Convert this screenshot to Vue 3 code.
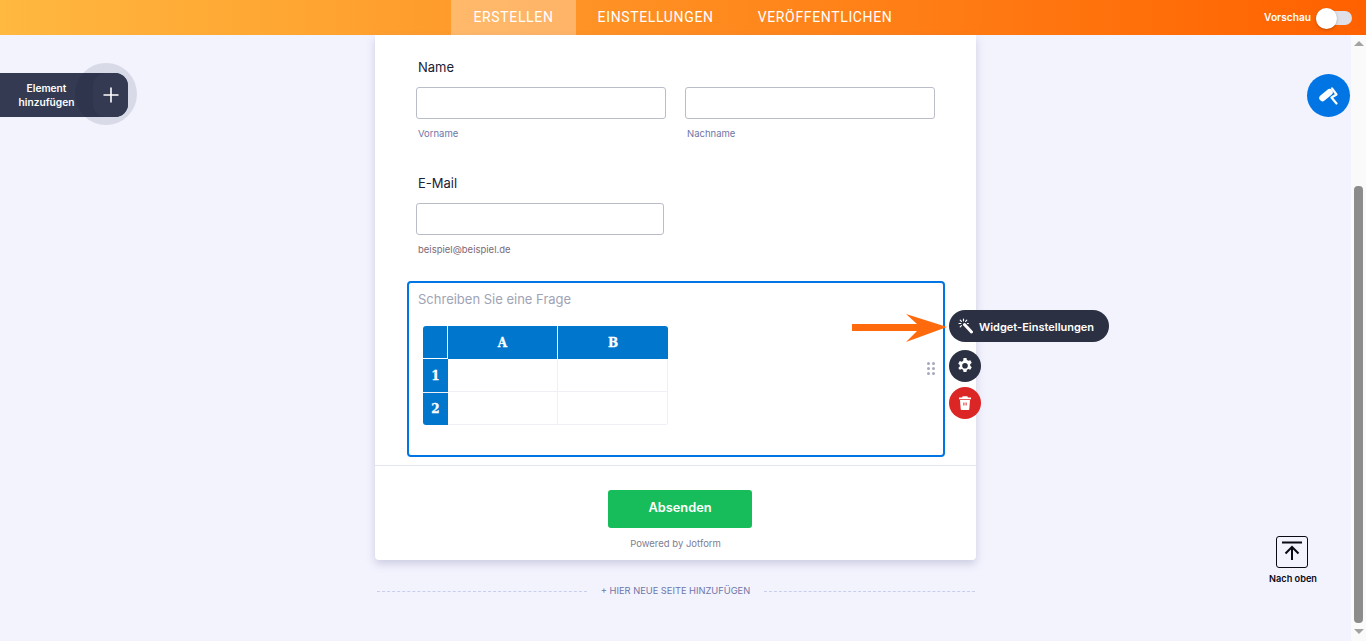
<template>
  <div class="app">
    <header class="topbar">
      <nav class="tabs">
        <a class="tab active">ERSTELLEN</a>
        <a class="tab">EINSTELLUNGEN</a>
        <a class="tab">VERÖFFENTLICHEN</a>
      </nav>
      <div class="preview">
        <span class="preview-label">Vorschau</span>
        <span class="toggle"><i class="knob"></i></span>
      </div>
    </header>

    <div class="body">
      <main class="canvas">
        <section class="card">
          <div class="field">
            <label class="label">Name</label>
            <div class="name-row">
              <div class="col">
                <div class="input"></div>
                <span class="sub">Vorname</span>
              </div>
              <div class="col">
                <div class="input"></div>
                <span class="sub">Nachname</span>
              </div>
            </div>
          </div>

          <div class="field email">
            <label class="label">E-Mail</label>
            <div class="col">
              <div class="input wide"></div>
              <span class="sub mail">beispiel@beispiel.de</span>
            </div>
          </div>

          <div class="question">
            <div class="q-label">Schreiben Sie eine Frage</div>
            <div class="matrix">
              <div class="m-row head">
                <div class="m-corner"></div>
                <div class="m-head" v-for="c in cols" :key="c">{{ c }}</div>
              </div>
              <div class="m-row" v-for="r in rows" :key="r">
                <div class="m-side">{{ r }}</div>
                <div class="m-cell"></div>
                <div class="m-cell"></div>
              </div>
            </div>

            <svg class="grip" width="8" height="13" viewBox="0 0 8 13">
              <g fill="#a6a8bd">
                <circle cx="1.5" cy="1.5" r="1.5" /><circle cx="6.5" cy="1.5" r="1.5" />
                <circle cx="1.5" cy="6.5" r="1.5" /><circle cx="6.5" cy="6.5" r="1.5" />
                <circle cx="1.5" cy="11.500" r="1.5" /><circle cx="6.5" cy="11.500" r="1.5" />
              </g>
            </svg>

            <div class="tools">
              <button class="widget-btn">
                <svg width="16" height="16" viewBox="0 0 16 16">
                  <path d="M6.5 6.500L13.500 14" stroke="#fff" stroke-width="3" stroke-linecap="round" />
                  <g stroke="#fff" stroke-width="1.200" stroke-linecap="round">
                    <path d="M5.500 1v1.800M1 5.500h1.800M2.200 2.200l1.200 1.200M2.200 8.800l1.200-1.200M8.800 2.200L7.600 3.400M9.500 5.500h.8" />
                  </g>
                </svg>
                <span class="widget-text">Widget-Einstellungen</span>
              </button>
              <button class="round dark">
                <svg width="18" height="18" viewBox="0 0 16 16">
                  <path fill="#fff" fill-rule="evenodd" d="M6.700.800h2.600l.4 1.900c.4.200.8.400 1.200.7l1.800-.6 1.300 2.300-1.400 1.300c.1.400.1.900 0 1.300l1.400 1.300-1.300 2.300-1.800-.6c-.4.300-.8.500-1.200.7l-.4 1.900H6.700l-.4-1.900c-.4-.2-.8-.4-1.200-.7l-1.800.6L2 9.800l1.400-1.300c-.1-.4-.1-.9 0-1.300L2 5.900l1.300-2.300 1.800.6c.4-.3.8-.5 1.200-.7zM8 5.300a2.500 2.500 0 1 0 0 5 2.500 2.500 0 0 0 0-5z" />
                </svg>
              </button>
              <button class="round red">
                <svg width="16" height="16" viewBox="0 0 16 16">
                  <path fill="#fff" fill-rule="evenodd" d="M5.600 1.200h4.800l.5 1.300h3.100v1.700H2V2.500h3.100zM3 5h10l-.7 9c0 .6-.5 1-1 1H4.700c-.5 0-1-.4-1-1zM6.400 7.500v3h1v-3zm2.200 0v3h1v-3z" />
                </svg>
              </button>
            </div>

            <svg class="arrow" width="96" height="30" viewBox="0 0 96 30">
              <path fill="#ff6a0d" d="M0 12h65L54 2l41 13-41 15 11-11H0z" />
            </svg>
          </div>

          <div class="submit-area">
            <button class="submit">Absenden</button>
            <div class="powered">Powered by Jotform</div>
          </div>
        </section>

        <div class="add-page">
          <span class="dash"></span>
          <span class="add-text">+ HIER NEUE SEITE HINZUFÜGEN</span>
          <span class="dash"></span>
        </div>
      </main>

      <div class="scrollbar">
        <span class="up"></span>
        <div class="track"><div class="thumb"></div></div>
        <span class="down"></span>
      </div>

      <div class="add-element">
        <span class="add-label">Element hinzufügen</span>
        <span class="add-halo"></span>
        <span class="add-plus">
          <svg width="16" height="16" viewBox="0 0 16 16">
            <path d="M8 .5v15M.5 8h15" stroke="#fff" stroke-width="1.600" />
          </svg>
        </span>
      </div>

      <button class="paint">
        <svg width="22" height="22" viewBox="0 0 22 22">
          <path d="M4.500 13l7-5.800" stroke="#fff" stroke-width="6.500" stroke-linecap="round" />
          <path d="M14 3.500l4.500 6-5 3 5 6" fill="none" stroke="#fff" stroke-width="2.200" stroke-linecap="round" stroke-linejoin="round" />
        </svg>
      </button>

      <div class="to-top">
        <span class="top-box">
          <svg width="30" height="30" viewBox="0 0 30 30">
            <path d="M5 5.500h20M15 23V10M8.500 16.500L15 10l6.500 6.500" fill="none" stroke="#0a0a14" stroke-width="2" />
          </svg>
        </span>
        <span class="top-text">Nach oben</span>
      </div>
    </div>
  </div>
</template>

<script setup>
const cols = ['A', 'B']
const rows = ['1', '2']
</script>

<style>
html, body { margin: 0; height: 100%; overflow: hidden; }
</style>

<style scoped>
.app {
  width: 1366px;
  height: 641px;
  display: flex;
  flex-direction: column;
  background: #f3f3fe;
  font-family: Inter, "Liberation Sans", sans-serif;
  color: #0a1551;
  overflow: hidden;
}
.topbar {
  height: 35px;
  flex: none;
  display: flex;
  justify-content: center;
  position: relative;
  background: linear-gradient(90deg, #ffb840 0%, #ff6100 100%);
}
.tabs { display: flex; }
.tab {
  height: 35px;
  line-height: 35px;
  padding: 0 22px;
  color: #fff;
  font-family: Roboto, sans-serif;
  font-size: 14px;
  font-weight: 400;
  letter-spacing: 0.650px;
}
.active { background: rgba(255, 255, 255, 0.3); }
.preview {
  position: absolute;
  right: 14px;
  top: 0;
  height: 35px;
  display: flex;
  align-items: center;
  gap: 5px;
  color: #fff;
  font-size: 10.200px;
  font-weight: 600;
}
.preview-label { margin-bottom: 1px; }
.toggle {
  width: 36px;
  height: 14px;
  border-radius: 7px;
  background: #dfe0e8;
  position: relative;
  display: block;
}
.knob {
  position: absolute;
  left: 0;
  top: -3px;
  width: 21px;
  height: 21px;
  border-radius: 50%;
  background: #fff;
  box-shadow: 0 1px 3px rgba(0, 0, 0, 0.25);
}
.body {
  flex: 1;
  display: flex;
  position: relative;
  min-height: 0;
}
.canvas {
  flex: 1;
  display: flex;
  flex-direction: column;
  align-items: center;
}
.card {
  width: 601px;
  height: 525px;
  box-sizing: border-box;
  background: #fff;
  border-radius: 0 0 4px 4px;
  box-shadow: 0 4px 8px rgba(87, 90, 140, 0.25);
  padding-top: 24px;
  display: flex;
  flex-direction: column;
}
.field { padding-left: 41px; }
.label {
  display: block;
  margin-left: 2px;
  font-size: 13px;
  line-height: 16px;
  font-weight: 400;
  color: #1c2235;
}
.name-row { display: flex; gap: 19px; margin-top: 12px; }
.col { display: flex; flex-direction: column; }
.input {
  width: 250px;
  height: 32px;
  box-sizing: border-box;
  border: 1px solid #b8bdc9;
  border-radius: 3px;
  background: #fff;
}
.input.wide { width: 248px; }
.sub {
  margin: 9px 0 0 2px;
  font-size: 9.500px;
  line-height: 12px;
  color: #6f76a7;
}
.sub.mail { color: #7c6a78; }
.email { margin-top: 35px; }
.email .col { margin-top: 12px; }
.question {
  position: relative;
  box-sizing: border-box;
  width: 538px;
  height: 176px;
  margin: 25px 0 0 32px;
  border: 2px solid #0075e3;
  border-radius: 4px;
  padding: 8px 0 0 9px;
}
.q-label {
  font-size: 13px;
  line-height: 16px;
  color: #a0a3b5;
}
.matrix {
  width: 245px;
  margin: 19px 0 0 5px;
  border-radius: 3px;
  overflow: hidden;
  font-family: "DejaVu Serif", "Liberation Serif", serif;
  font-weight: 900;
  font-size: 12px;
  color: #fff;
  -webkit-text-stroke: 0.3px #fff;
}
.m-row { display: flex; height: 33px; }
.m-corner, .m-side {
  width: 25px;
  background: #0077cc;
  display: flex;
  align-items: center;
  justify-content: center;
  box-sizing: border-box;
}
.m-corner { border-right: 1px solid #fff; border-bottom: 1px solid #fff; }
.m-side { border-top: 1px solid #eef0f5; }
.m-row:nth-child(2) .m-side { border-top: none; }
.m-head {
  width: 110px;
  background: #0077cc;
  display: flex;
  align-items: center;
  justify-content: center;
  box-sizing: border-box;
  border-right: 1px solid #fff;
}
.m-head:last-child { border-right: none; }
.m-cell {
  width: 110px;
  box-sizing: border-box;
  border-right: 1px solid #eef0f5;
  border-bottom: 1px solid #eef0f5;
}
.grip { position: absolute; left: 518px; top: 79px; }
.tools {
  position: absolute;
  left: 540px;
  top: 27px;
  display: flex;
  flex-direction: column;
  align-items: flex-start;
  gap: 5px;
}
.widget-btn {
  width: 160px;
  height: 32px;
  margin-bottom: 3px;
  border: none;
  border-radius: 16px;
  background: #2b3043;
  color: #fff;
  display: flex;
  align-items: center;
  gap: 5px;
  padding: 0 0 0 9px;
  font-family: Inter, sans-serif;
  font-size: 11px;
  font-weight: 600;
  white-space: nowrap;
}
.widget-text { margin-top: 1px; }
.round {
  width: 32px;
  height: 32px;
  border: none;
  padding: 0;
  border-radius: 50%;
  display: flex;
  align-items: center;
  justify-content: center;
}
.dark { background: #2b3043; }
.red { background: #dc2626; }
.arrow { position: absolute; left: 443px; top: 29px; }
.submit-area {
  margin-top: 8px;
  border-top: 1px solid #e3e5f0;
  padding-top: 24px;
  display: flex;
  flex-direction: column;
  align-items: center;
}
.submit {
  width: 144px;
  height: 38px;
  margin-left: 9px;
  padding: 0 0 3px;
  border: none;
  border-radius: 3px;
  background: #18bd5b;
  color: #fff;
  font-family: Inter, sans-serif;
  font-size: 12.800px;
  font-weight: 600;
}
.powered {
  margin-top: 10px;
  font-size: 9.500px;
  line-height: 12px;
  color: #7c8092;
}
.add-page {
  width: 598px;
  margin-top: 25px;
  display: flex;
  align-items: center;
  gap: 14px;
}
.dash { flex: 1; border-top: 1px dashed #c8ceed; }
.add-text {
  font-size: 9.300px;
  line-height: 12px;
  color: #6f76a7;
  white-space: nowrap;
}
.scrollbar {
  width: 15px;
  flex: none;
  display: flex;
  flex-direction: column;
  background: #fafafa;
}
.up, .down {
  width: 0;
  height: 0;
  margin: 0 auto;
  border-left: 5px solid transparent;
  border-right: 5px solid transparent;
}
.up { border-bottom: 5px solid #a3a3a3; margin-top: 6px; }
.down { border-top: 5px solid #a3a3a3; margin-top: 6px; margin-bottom: 7px; }
.track { flex: 1; display: flex; flex-direction: column; justify-content: flex-end; }
.thumb {
  width: 9px;
  height: 437px;
  margin: 0 auto;
  border-radius: 4px;
  background: #8c8c8c;
}
.add-element {
  position: absolute;
  left: 0;
  top: 38px;
  width: 128px;
  height: 44px;
  border-radius: 0 13px 13px 0;
  background: #343a51;
  color: #fff;
  display: flex;
  align-items: center;
}
.add-label {
  width: 93px;
  text-align: center;
  font-size: 10.200px;
  font-weight: 600;
  line-height: 14px;
  position: relative;
}
.add-halo {
  position: absolute;
  left: 75px;
  top: -10px;
  width: 62px;
  height: 62px;
  border-radius: 50%;
  background: rgba(10, 15, 50, 0.11);
}
.add-plus {
  position: absolute;
  left: 93px;
  top: 0;
  width: 35px;
  height: 44px;
  border-radius: 13px;
  background: #343a51;
  display: flex;
  align-items: center;
  justify-content: center;
}
.paint {
  position: absolute;
  left: 1307px;
  top: 39px;
  width: 43px;
  height: 43px;
  border: none;
  padding: 0;
  border-radius: 50%;
  background: #0075e3;
  display: flex;
  align-items: center;
  justify-content: center;
}
.to-top {
  position: absolute;
  left: 1263px;
  top: 501px;
  width: 60px;
  display: flex;
  flex-direction: column;
  align-items: center;
}
.top-box {
  width: 32px;
  height: 32px;
  margin-right: 2px;
  box-sizing: border-box;
  border: 1px solid #0a0a14;
  border-radius: 3px;
  display: flex;
  align-items: center;
  justify-content: center;
}
.top-text {
  margin-top: 5px;
  font-size: 9.200px;
  font-weight: 600;
  line-height: 12px;
  color: #0a0a14;
  white-space: nowrap;
}
</style>
